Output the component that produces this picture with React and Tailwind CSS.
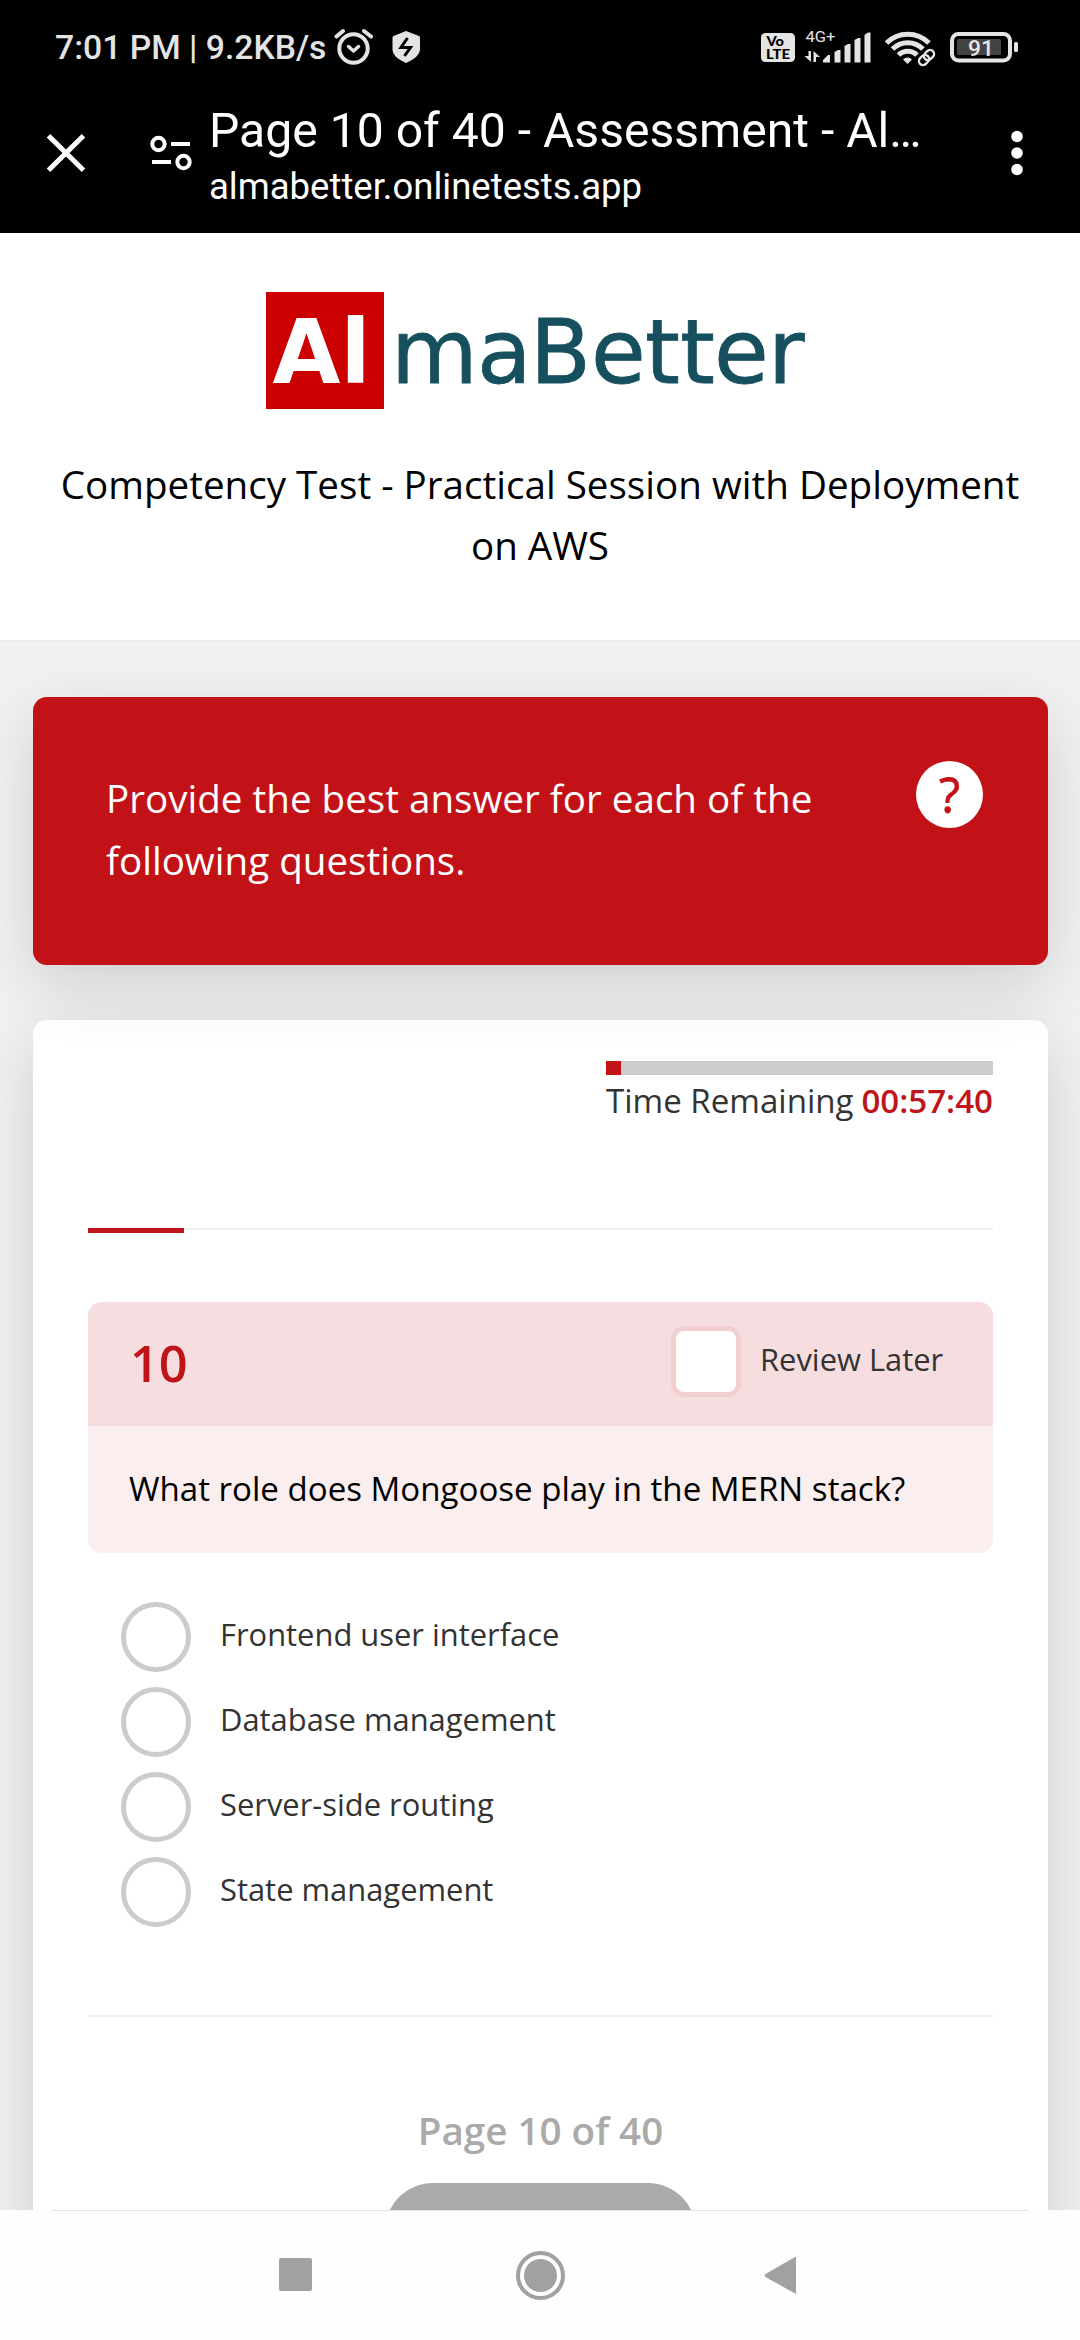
const options = ["Frontend user interface", "Database management", "Server-side routing", "State management"];

function StatusBar() {
  return (
    <div className="h-[76px] flex items-start font-medium text-[#e4e4e4]">
      <span className="ml-[55px] mt-[28px] text-[33.700px] leading-[40px] whitespace-nowrap w-[275px]">7:01 PM | 9.2KB/s</span>
      <svg className="ml-[4px] mt-[28px] shrink-0" width="40" height="40" viewBox="334 28 40 40" fill="none" stroke="#e4e4e4" strokeLinecap="round">
        <circle cx="353.500" cy="48.500" r="14.200" strokeWidth="4" />
        <path d="M336.500 36.500 L343 31 M364 31 L371 36.500" strokeWidth="4" />
        <path d="M348.500 46.500 L353.500 51 L358.500 46.500" strokeWidth="3.500" strokeLinejoin="round" />
      </svg>
      <svg className="ml-[17px] mt-[28px] shrink-0" width="30" height="40" viewBox="390 28 30 40">
        <path d="M405 31 L418 36 Q419 36.500 419 38 V50 Q418.500 57 405 63 Q391.500 57 391.500 50 V38 Q391.500 36.500 392.500 36 Z" fill="#e4e4e4" />
        <path d="M406.500 38 L400 47.500 H409.500 L403.500 56" fill="none" stroke="#000" strokeWidth="3" />
      </svg>
      <svg className="ml-[338px] mt-[24px] shrink-0" width="262" height="44" viewBox="758 24 262 44" fill="#e4e4e4">
        <rect x="760" y="33" width="34" height="29" rx="4.500" />
        <g fill="#000" fontFamily="Lato" fontWeight="900">
          <text x="765.500" y="46" fontSize="12.500" textLength="17.500" lengthAdjust="spacingAndGlyphs">Vo</text>
          <text x="765" y="58.500" fontSize="13" textLength="24" lengthAdjust="spacingAndGlyphs">LTE</text>
        </g>
        <text x="804.500" y="42" fontSize="15.500" fontFamily="Roboto" fontWeight="400" textLength="30" lengthAdjust="spacingAndGlyphs">4G+</text>
        <path d="M807.500 51 H810 V62 L803.500 56 H807.500 Z M812.500 62 V51 L819 57 H815 V62 Z" />
        <path d="M822 62.500 V60 L827 55 H829 V62.500 Z M833.500 62.500 V52 L837 50 H839.500 V62.500 Z M843.500 62.500 V46 L847 44 H849.500 V62.500 Z M853.500 62.500 V40 L857 38 H859.500 V62.500 Z M863.500 62.500 V35 L867 32.500 H869.500 V62.500 Z" />
        <g fill="none" stroke="#e4e4e4" strokeWidth="5">
          <path d="M885.500 43 A30 30 0 0 1 928 43" />
          <path d="M891.500 49 A21.500 21.500 0 0 1 922 49" />
          <path d="M897.500 55 A13 13 0 0 1 916 55" />
        </g>
        <path d="M902 59.500 Q906.500 55.500 911 59.500 L906.500 64 Z" />
        <g fill="none" stroke="#e4e4e4" strokeWidth="2.400" transform="rotate(-45 925.500 57.500)">
          <rect x="916.500" y="53.500" width="11" height="8" rx="4" />
          <rect x="923.500" y="53.500" width="11" height="8" rx="4" />
        </g>
        <rect x="951" y="34" width="58" height="26.500" rx="6.500" fill="none" stroke="#e4e4e4" strokeWidth="4" />
        <rect x="956" y="39" width="44" height="16" rx="1.500" fill="#444" />
        <text x="967" y="55.500" fontSize="22" fontFamily="Roboto" fontWeight="500" textLength="26" lengthAdjust="spacingAndGlyphs">91</text>
        <rect x="1013" y="42" width="4" height="10" rx="1.500" />
      </svg>
    </div>
  );
}

function BrowserBar() {
  return (
    <div className="h-[157px] flex text-white">
      <svg className="ml-[44px] mt-[54px] shrink-0" width="44" height="44" viewBox="44 130 44 44" stroke="#fff" strokeWidth="5">
        <path d="M48.500 135.800 L83.500 170.200 M83.500 135.800 L48.500 170.200" />
      </svg>
      <svg className="ml-[60px] mt-[58px] shrink-0" width="48" height="44" viewBox="148 134 48 44" fill="none" stroke="#fff" strokeWidth="4">
        <circle cx="158.500" cy="144" r="6.200" />
        <path d="M171 144 H190 M152 162 H171" />
        <circle cx="183.500" cy="162" r="6.200" />
      </svg>
      <div className="ml-[13px] mt-[27px] w-[740px]">
        <div className="text-[48.100px] leading-[56px] whitespace-nowrap">Page 10 of 40 - Assessment - Al…</div>
        <div className="mt-[6px] text-[36.500px] leading-[44px] whitespace-nowrap">almabetter.onlinetests.app</div>
      </div>
      <svg className="ml-[56px] mt-[52px] shrink-0" width="24" height="56" viewBox="1005 128 24 56" fill="#fff">
        <circle cx="1017" cy="136.500" r="5.800" />
        <circle cx="1017" cy="153" r="5.800" />
        <circle cx="1017" cy="169.500" r="5.800" />
      </svg>
    </div>
  );
}

function Header() {
  return (
    <header className="h-[409px] bg-white border-b-2 border-[#ebebeb] flex flex-col items-center">
      <svg className="mt-[59px] shrink-0" width="548" height="117" viewBox="266 292 548 117">
        <rect x="266" y="292" width="118" height="117" fill="#cc0000" />
        <text x="272.500" y="383" fontSize="89" fontWeight="700" fontFamily="'DejaVu Sans'" fill="#fff" textLength="98" lengthAdjust="spacingAndGlyphs">Al</text>
        <text x="391 477 530 591 645 680 714 768" y="383" fontSize="89" fontFamily="'DejaVu Sans'" fill="#164f5d" stroke="#164f5d" strokeWidth="0.800">maBetter</text>
      </svg>
      <h1 className="mt-[45px] w-[1000px] text-center text-[38.600px] leading-[61px] text-black">
        Competency Test - Practical Session with Deployment on AWS
      </h1>
    </header>
  );
}

function Instructions() {
  return (
    <section className="relative z-10 h-[268px] rounded-[14px] bg-[#c21217] shadow-[0_20px_64px_rgba(0,0,0,0.14)] flex items-start text-white">
      <p className="ml-[73px] mt-[70px] w-[740px] text-[38.600px] leading-[62px]">
        Provide the best answer for each of the<br />following questions.
      </p>
      <span className="ml-[70px] mt-[64px] size-[67px] rounded-full bg-white text-[#c21217] text-[49px] leading-[67px] [-webkit-text-stroke:0.8px] text-center">?</span>
    </section>
  );
}

function Question() {
  return (
    <div className="mt-[69px] rounded-[14px] overflow-hidden">
      <div className="h-[124px] bg-[#f6dde0] flex items-start">
        <span className="ml-[42px] mt-[27px] w-[200px] text-[50.500px] leading-[68px] font-semibold text-[#be141a]">10</span>
        <span className="ml-[341px] mt-[24px] w-[70px] h-[71px] rounded-[13px] border-5 border-[#f2d0d2] bg-white" />
        <span className="ml-[19px] mt-[35px] text-[30.900px] leading-[44px] text-[#333]">Review Later</span>
      </div>
      <div className="h-[127px] bg-[#faeeee] pl-[41px] pt-[40px] text-[33.100px] leading-[46px] text-black">
        What role does Mongoose play in the MERN stack?
      </div>
    </div>
  );
}

function Quiz() {
  return (
    <main className="mt-[55px] h-[1300px] shrink-0 rounded-t-[14px] bg-white shadow-[0_20px_64px_rgba(0,0,0,0.14)] px-[55px] flex flex-col">
      <div className="mt-[41px] self-end w-[387px] text-[33.100px] leading-[48px] text-[#333]">
        <div className="h-[14px] bg-[#ccc]"><div className="h-full w-[15px] bg-[#c21217]" /></div>
        <div className="mt-[2px] flex justify-between whitespace-nowrap">
          <span>Time Remaining</span>
          <span className="font-semibold text-[#be141a]">00:57:40</span>
        </div>
      </div>
      <div className="mt-[103px] h-[5px]">
        <div className="h-[2px] bg-[#eee]"><div className="h-[5px] w-[96px] bg-[#be141a]" /></div>
      </div>
      <Question />
      <div className="mt-[49px] ml-[33px] flex flex-col gap-[15px]">
        {options.map((label) => (
          <div key={label} className="flex h-[70px]">
            <span className="size-[70px] rounded-full border-5 border-[#ccc]" />
            <span className="ml-[29px] mt-[10px] text-[30.900px] leading-[44px] text-[#333]">{label}</span>
          </div>
        ))}
      </div>
      <div className="mt-[88px] h-[2px] shrink-0 bg-[#eee]" />
      <div className="mt-[87px] text-center text-[38.600px] leading-[52px] font-semibold text-[#aaa]">Page 10 of 40</div>
      <div className="mt-[27px] self-center w-[311px] h-[96px] shrink-0 rounded-full bg-[#aaa]" />
    </main>
  );
}

function NavBar() {
  return (
    <nav className="h-[130px] bg-[#fefefe]">
      <div className="mx-[52px] h-px bg-[#e2e2e2]" />
      <div className="flex h-[129px] items-start pl-[279px]">
        <span className="mt-[47px] size-[33px] rounded-[2px] bg-[#a1a1a1]" />
        <span className="ml-[204px] mt-[40px] size-[49px] rounded-full border-4 border-[#a1a1a1] p-1"><span className="block size-full rounded-full bg-[#a1a1a1]" /></span>
        <svg className="ml-[199px] mt-[45px]" width="33" height="38" viewBox="764 2256 33 38" fill="#a1a1a1">
          <path d="M796 2257.500 V2293.500 Q796 2294 795 2293.500 L765.500 2277 Q763.500 2275.500 765.500 2274 L795 2257 Q796 2256.500 796 2257.500 Z" />
        </svg>
      </div>
    </nav>
  );
}

export default function App() {
  return (
    <div className="w-[1080px] h-[2340px] overflow-hidden flex flex-col bg-white font-['Open_Sans',sans-serif]">
      <div className="h-[233px] shrink-0 bg-black font-['Roboto',sans-serif]">
        <StatusBar />
        <BrowserBar />
      </div>
      <div className="h-[1977px] shrink-0 overflow-hidden bg-[#f1f1f1]">
        <Header />
        <div className="pl-[33px] pr-[32px] pt-[55px]">
          <Instructions />
          <Quiz />
        </div>
      </div>
      <NavBar />
    </div>
  );
}
